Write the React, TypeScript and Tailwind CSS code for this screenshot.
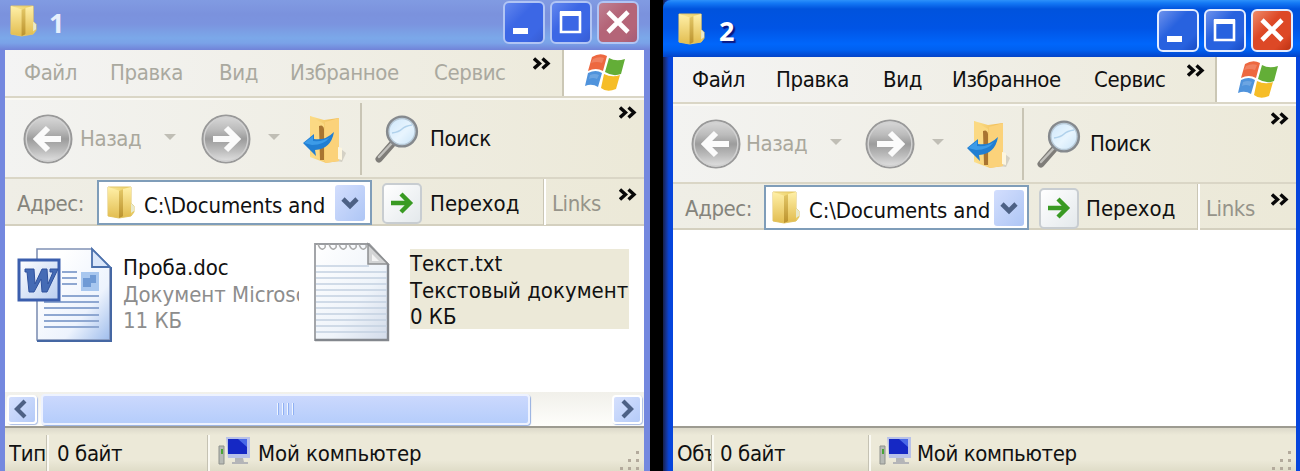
import React from 'react';
import clsx from 'clsx';

const layouts = {
  first: {
    title: 'h-[50px] pl-[5px] pb-1',
    buttons: 'gap-[5px] pr-[11px] pt-px',
    menu: 'h-12 pl-[19px] grid-cols-[86px_109px_71px_144px_99px_29px_1fr]',
    toolbar: 'h-[81px] pl-[18px] grid-cols-[57px_84px_37px_67px_30px_62px_15px_55px_189px_1fr]',
    address: 'h-[47px] pl-3 grid-cols-[80px_285px_48px_113px_9px_67px_1fr]',
    combo: 'w-[275px] pl-2 pr-[5px]',
    status: 'grid-cols-[37px_11px_150px_11px_40px_1fr]',
  },
  second: {
    title: 'h-[57px] pl-[5px] pt-1',
    buttons: 'gap-[5px] pr-[7px] pt-[5px]',
    menu: 'h-[47px] pl-[19px] grid-cols-[84px_107px_69px_142px_93px_28px_1fr]',
    toolbar: 'h-20 pl-[18px] grid-cols-[55px_84px_35px_67px_30px_60px_15px_53px_181px_1fr]',
    address: 'h-[46px] pl-3 grid-cols-[79px_275px_47px_111px_9px_65px_1fr]',
    combo: 'w-[265px] pl-1.5 pr-[3px]',
    status: 'grid-cols-[34px_9px_148px_11px_38px_1fr]',
  },
};

export default function App() {
  return (
    <div className="flex h-[471px] w-[1300px] overflow-hidden bg-black font-['DejaVu_Sans_Condensed','DejaVu_Sans',sans-serif] text-[22px] leading-[26px] tracking-[-0.4px] text-[#111] [font-stretch:condensed]">
      <div className="w-[650px] bg-[#7488df]">
        <ExplorerWindow title="1" status="Тип">
          <Files />
        </ExplorerWindow>
      </div>
      <div className="ml-[13px] w-[637px] bg-gradient-to-r from-[#16204c] via-[#0645dc] via-[6px] to-[#0645dc]">
        <ExplorerWindow title="2" status="Объ" active />
      </div>
    </div>
  );
}

type WindowProps = {
  title: string;
  status: string;
  active?: boolean;
  children?: React.ReactNode;
};

function ExplorerWindow({ title, status, active = false, children }: WindowProps) {
  const l = active ? layouts.second : layouts.first;

  return (
    <div className="flex h-full flex-col">
      {/* Заголовок окна */}
      <div
        className={clsx(
          'flex shrink-0 items-center justify-between',
          l.title,
          active
            ? 'rounded-tl-lg bg-[linear-gradient(#2d91fa_0px,#1479f5_3px,#0053dd_9px,#0054e5_28px,#0066fb_44px,#0060f0_50px,#0443c8_57px)]'
            : 'bg-[linear-gradient(#819be2_0px,#7b92dd_14px,#7b94df_24px,#7ba8e9_38px,#7aa2e8_43px,#7183d8_50px)]'
        )}
      >
        <div className={clsx('flex items-center', active ? 'ml-[10px] gap-[14px]' : 'ml-[5px] gap-3')}>
          <FolderIcon className={clsx('h-8 w-[27px]', active ? '-mt-1' : '-mt-1')} />
          <span
            className={clsx(
              "font-['Noto_Sans',sans-serif] text-[27px] font-bold",
              active ? 'text-white [text-shadow:2px_2px_1px_#0a1883]' : 'text-[#e6effc]'
            )}
          >
            {title}
          </span>
        </div>
        <div className={clsx('flex self-start', l.buttons)}>
          <TitleButton active={active}>
            <rect x="10" y="27" width="15" height="6" fill="#fff" />
          </TitleButton>
          <TitleButton active={active}>
            <path d="M11 12h19v19H11z" fill="none" stroke="#fff" strokeWidth="2.6" />
            <path d="M10 10h21v5H10z" fill="#fff" />
          </TitleButton>
          <TitleButton active={active} close>
            <path d="M11 11l20 20M31 11L11 31" stroke="#fff" strokeWidth="4.6" />
          </TitleButton>
        </div>
      </div>

      <div className={clsx('flex min-h-0 flex-1 flex-col bg-white', active ? 'ml-[10px] mr-1' : 'ml-[5px] mr-[6px]')}>
        {/* Меню */}
        <div className={clsx('grid shrink-0 items-center border-b-2 border-[#dad6c6] bg-gradient-to-r from-[#f4f4f4] to-[#ece9d8]', l.menu, active ? 'text-[#111]' : 'text-[#aaa99f]')}>
          <span>Файл</span>
          <span>Правка</span>
          <span>Вид</span>
          <span>Избранное</span>
          <span>Сервис</span>
          <Chevrons className="mt-[7px] self-start" />
          <div className="flex h-full items-center justify-center border-l-2 border-[#cbc7b5] bg-white pl-1">
            <WindowsFlag />
          </div>
        </div>

        {/* Панель инструментов */}
        <div className={clsx('grid shrink-0 items-center border-b-2 border-t-2 border-b-[#dad6c6] border-t-[#faf9f4] bg-gradient-to-r from-[#f3f3f1] to-[#ece9d8]', l.toolbar)}>
          <RoundArrow />
          <span className="text-[#aaa89d]">Назад</span>
          <Triangle />
          <RoundArrow forward />
          <Triangle />
          <FolderUp />
          <div className="h-[72px] w-0.5 bg-[#c9c5b5]" />
          <Magnifier />
          <span>Поиск</span>
          <Chevrons className="mt-1.5 self-start" />
        </div>

        {/* Адресная строка */}
        <div className={clsx('grid shrink-0 items-center border-b-2 border-[#d4d0bf] bg-gradient-to-r from-[#efeee6] to-[#ece9d8]', l.address)}>
          <span className="pt-1 text-[#85847c]">Адрес:</span>
          <div className={clsx('mt-px flex h-[45px] items-center border-2 border-[#7f9db9] bg-white', l.combo)}>
            <FolderIcon className="h-[33px] w-7 shrink-0" />
            <span className="ml-[9px] w-[190px] whitespace-nowrap pt-1.5 tracking-[-0.15px]">C:\Documents and</span>
            <div className="ml-auto flex h-9 w-[30px] shrink-0 items-center justify-center rounded-[3px] bg-gradient-to-br from-[#d3defd] to-[#aec6f5]">
              <svg width="18" height="14" viewBox="0 0 18 14">
                <path d="M2 3l7 7 7-7" fill="none" stroke="#4d6185" strokeWidth="4.6" />
              </svg>
            </div>
          </div>
          <div className="mt-0.5 flex h-[41px] w-10 items-center justify-center rounded-[5px] border-2 border-[#c8cdd1] bg-gradient-to-br from-white to-[#e4e9ec]">
            <svg width="24" height="24" viewBox="0 0 24 24">
              <path d="M1 12h19M11 3l9 9-9 9" fill="none" stroke="#399a23" strokeWidth="4.4" />
            </svg>
          </div>
          <span className="pt-1 tracking-[0px]">Переход</span>
          <div className="h-full w-[3px] border-l border-[#cac6b5] bg-white" />
          <span className="pt-1 text-[#96948a]">Links</span>
          <Chevrons className="mt-[9px] self-start" />
        </div>

        <div className="min-h-0 flex-1 overflow-hidden">{children}</div>

        {/* Строка состояния */}
        <div className={clsx('grid h-[45px] shrink-0 items-center border-t-2 border-[#9d9b91] bg-[linear-gradient(#dcd9ca,#ece9d8_7px,#ece9d8_32px,#dfdcc8)] pl-1 pt-[7px]', l.status)}>
          <span className="overflow-hidden whitespace-nowrap pt-0.5">{status}</span>
          <Divider />
          <span className="pt-0.5">0 байт</span>
          <Divider />
          <ComputerIcon />
          <div className="flex h-full justify-between">
            <span className={clsx('pt-1.5', active ? 'tracking-[-0.4px]' : 'tracking-[-0.1px]')}>Мой компьютер</span>
            <Grip />
          </div>
        </div>
      </div>
    </div>
  );
}

function Files() {
  return (
    <div className="flex h-full flex-col justify-between">
      <div className="flex pl-3 pt-4 leading-[26.5px] tracking-[0px]">
        <WordIcon />
        <div className="ml-1.5 mt-[13px] w-[176px] overflow-hidden whitespace-nowrap text-[#8d8d8d]">
          <div className="text-[#111]">Проба.doc</div>
          <div>Документ Microsoft</div>
          <div>11 КБ</div>
        </div>
        <TextIcon />
        <div className="ml-[19px] mt-[7px] h-[80px] w-[219px] whitespace-nowrap bg-[#ece9d8] pt-0.5">
          <div>Текст.txt</div>
          <div>Текстовый документ</div>
          <div>0 КБ</div>
        </div>
      </div>

      {/* Горизонтальная прокрутка */}
      <div className="flex h-[34px] items-center bg-gradient-to-b from-[#f1f0ea] to-[#fefefb] px-0.5">
        <ScrollButton d="M14 5L6 13l8 8" />
        <div className="ml-1 flex h-[31px] w-[489px] items-center justify-center gap-[3px] rounded-[4px] border-2 border-[#edf2ff] bg-gradient-to-b from-[#cbd8fd] to-[#b5cdfb] shadow-[1px_1px_1px_#94aee0]">
          {[0, 1, 2, 3].map((i) => (
            <div key={i} className="h-3 w-0.5 border-l border-[#eef4fe] bg-[#8fb0f3]" />
          ))}
        </div>
        <div className="ml-auto">
          <ScrollButton d="M7 5l8 8-8 8" />
        </div>
      </div>
    </div>
  );
}

function ScrollButton({ d }: { d: string }) {
  return (
    <div className="flex h-[29px] w-[30px] items-center justify-center rounded-[4px] border-2 border-white bg-gradient-to-br from-[#d5e0fd] to-[#b5cbf8] shadow-[1px_1px_1px_#a9bce5]">
      <svg width="22" height="26" viewBox="0 0 22 26">
        <path d={d} fill="none" stroke="#4d6185" strokeWidth="4.2" />
      </svg>
    </div>
  );
}

function TitleButton({ active, close, children }: { active: boolean; close?: boolean; children: React.ReactNode }) {
  const id = `button-${active ? 'on' : 'off'}-${close ? 'close' : 'blue'}`;
  const light = close ? (active ? '#f09070' : '#c08294') : active ? '#7295ed' : '#6589ef';
  const main = close ? (active ? '#dd4826' : '#b46578') : active ? '#2862df' : '#3c67e5';
  const dark = close ? (active ? '#b93011' : '#a25b77') : active ? '#1648c2' : '#375bd0';

  return (
    <svg width="42" height="43" viewBox="0 0 42 43">
      <defs>
        <linearGradient id={id} x1="0" y1="0" x2="1" y2="1">
          <stop offset="0" stopColor={light} />
          <stop offset=".4" stopColor={main} />
          <stop offset=".75" stopColor={main} />
          <stop offset="1" stopColor={dark} />
        </linearGradient>
      </defs>
      <rect x="1" y="1" width="40" height="41" rx="5" fill={`url(#${id})`} stroke={active ? '#e4edff' : '#b1c5f4'} strokeWidth="2" />
      {children}
    </svg>
  );
}

function Chevrons({ className }: { className?: string }) {
  return (
    <svg className={className} width="18" height="13" viewBox="0 0 18 13">
      <path d="M1 1.5l5.5 5L1 11.5M9.500 1.5l5.5 5-5.5 5" fill="none" stroke="#080808" strokeWidth="3.4" />
    </svg>
  );
}

function Divider() {
  return <div className="h-9 w-[3px] border-l border-[#c5c2b3] bg-[#faf9f2]" />;
}

function Triangle() {
  return (
    <svg width="12" height="8" viewBox="0 0 12 8" className="-mt-1">
      <path d="M0 1h12L6 7z" fill="#c0beb5" />
    </svg>
  );
}

function Grip() {
  return (
    <svg className="mr-0.5 mt-2.5 shrink-0" width="24" height="26" viewBox="0 0 24 26">
      <path d="M18 6h3v3h-3zM10 14h3v3h-3zM18 14h3v3h-3zM2 22h3v3H2zM10 22h3v3h-3zM18 22h3v3h-3z" fill="#b3aa9c" />
    </svg>
  );
}

function FolderIcon({ className }: { className?: string }) {
  return (
    <svg className={className} viewBox="0 0 28 33" preserveAspectRatio="none">
      <defs>
        <linearGradient id="folder-back">
          <stop stopColor="#f9e99e" />
          <stop offset="1" stopColor="#e9c953" />
        </linearGradient>
        <linearGradient id="folder-front" x1="0" y1="0" x2="0" y2="1">
          <stop stopColor="#fff0a8" />
          <stop offset="1" stopColor="#e2bd50" />
        </linearGradient>
        <linearGradient id="folder-fold" x1="0" y1="0" x2="0" y2="1">
          <stop stopColor="#e3c766" />
          <stop offset="1" stopColor="#bb922e" />
        </linearGradient>
      </defs>
      <path d="M1 1h23v16l3 3v6l-3 4-12 2-11-2z" fill="url(#folder-back)" stroke="#e1c568" />
      <path d="M1 1l12 4v27L1 30z" fill="url(#folder-front)" />
      <path d="M12 5l5-2v27l-5 2z" fill="url(#folder-fold)" />
      <path d="M16 3l8-2v29l-8 1z" fill="url(#folder-front)" />
      <path d="M24 17l3 3v5l-3 2z" fill="#e8e9cb" />
    </svg>
  );
}

function WindowsFlag() {
  return (
    <svg width="42" height="38" viewBox="0 0 42 38">
      <path d="M7 3q8-5 15-1l-4 15q-7-4-15 0z" fill="#ed6840" />
      <path d="M24 4q7 4 16 1l-4 15q-8 3-16-2z" fill="#63ae37" />
      <path d="M3 19q8-4 14 0l-4 14q-6-4-13-1z" fill="#4f93dc" />
      <path d="M19 20q8 4 16 1l-4 14q-9 4-15-1z" fill="#f6bd27" />
      <path d="M8 5q6-3 11-1l-2 5q-5-2-11 0zM5 21q5-2 9 0l-2 4q-4-2-8 0z" fill="#fff" opacity=".17" />
    </svg>
  );
}

function RoundArrow({ forward }: { forward?: boolean }) {
  const id = forward ? 'round-forward' : 'round-back';

  return (
    <svg width="50" height="50" viewBox="0 0 50 50">
      <defs>
        <linearGradient id={id} x1="0" y1="0" x2="0" y2="1">
          <stop stopColor="#dadada" />
          <stop offset=".3" stopColor="#bcbcbc" />
          <stop offset=".5" stopColor="#9c9c9c" />
          <stop offset=".75" stopColor="#bdbdbd" />
          <stop offset="1" stopColor="#e4e4e4" />
        </linearGradient>
      </defs>
      <circle cx="25" cy="25" r="23.6" fill={`url(#${id})`} stroke="#999" strokeWidth="1.8" />
      <circle cx="25" cy="25" r="21.8" fill="none" stroke="#d1d1d1" strokeWidth="1.4" />
      <path
        d={forward ? 'M12 25h24M25 14l11 11-11 11' : 'M38 25H14M25 14L14 25l11 11'}
        fill="none"
        stroke="#fbfbfb"
        strokeWidth="6"
      />
    </svg>
  );
}

function FolderUp() {
  return (
    <svg width="48" height="52" viewBox="0 0 48 52">
      <defs>
        <linearGradient id="up-folder">
          <stop stopColor="#fce18d" />
          <stop offset="1" stopColor="#efb74f" />
        </linearGradient>
      </defs>
      <path d="M38 48l5-12 5 4-4 9z" fill="#c9c5b8" opacity=".7" />
      <path d="M12 3l14 4 15-2v43l-13 2-16-6z" fill="url(#up-folder)" />
      <path d="M12 3l14 8v37l-14-6z" fill="#fbd983" />
      <path d="M27 9l14-4v43l-14 2z" fill="#fbd27a" />
      <path d="M40 34l4 1v12l-4-1z" fill="#fdf6df" />
      <path d="M21 13q4-2 5 3v31h-4z" fill="#a97430" />
      <path d="M5 30l11-9v5q11 2 20-7-3 17-19 18l1 6z" fill="#217ed2" />
      <path d="M6 30l9-7v5q10 1 17-4-6 8-18 8z" fill="#3c9be8" />
    </svg>
  );
}

function Magnifier() {
  return (
    <svg width="44" height="50" viewBox="0 0 44 50">
      <defs>
        <linearGradient id="lens" x1="0" y1="0" x2="1" y2="1">
          <stop stopColor="#cce6fb" />
          <stop offset=".55" stopColor="#e8f5fe" />
          <stop offset="1" stopColor="#c6e2f7" />
        </linearGradient>
      </defs>
      <path d="M18 29L4 45" stroke="#7f7d79" strokeWidth="7" strokeLinecap="round" />
      <path d="M17 29L4 43" stroke="#c1c0bc" strokeWidth="2.4" strokeLinecap="round" />
      <circle cx="27" cy="17.5" r="14.6" fill="url(#lens)" stroke="#85898d" strokeWidth="3" />
      <circle cx="27" cy="17.5" r="13" fill="none" stroke="#b7c9d7" strokeWidth="1.3" />
      <path d="M17 19q7-1 10-4t10-4" fill="none" stroke="#b1d2ec" strokeWidth="1.5" />
    </svg>
  );
}

function ComputerIcon() {
  return (
    <svg width="34" height="30" viewBox="0 0 34 30" className="-mt-1">
      <path d="M1 10h5v18H1z" fill="#b7bab5" stroke="#8e918d" />
      <path d="M3 13h2v5H3z" fill="#4ba536" />
      <path d="M8 1h24v21H10z" fill="#b8c1e8" />
      <path d="M10 3h19v15H10z" fill="#1528c4" />
      <path d="M20 3h9v8z" fill="#4969e7" />
      <path d="M17 22h8l1 4h4v2H14v-2h3z" fill="#b4b5b8" />
    </svg>
  );
}

function WordIcon() {
  return (
    <svg width="100" height="101" viewBox="0 0 100 101" className="shrink-0">
      <defs>
        <linearGradient id="word-page" x1=".2" y1=".2" x2="1" y2="1">
          <stop stopColor="#fff" />
          <stop offset=".6" stopColor="#edf3fd" />
          <stop offset="1" stopColor="#9fbdec" />
        </linearGradient>
        <linearGradient id="word-badge" x1="0" y1="0" x2="1" y2="1">
          <stop stopColor="#fff" />
          <stop offset="1" stopColor="#b9cdf0" />
        </linearGradient>
      </defs>
      <path d="M20 7h55l18 18v73H20z" fill="url(#word-page)" stroke="#8091b5" strokeWidth="1.6" />
      <path d="M94 25v74H20" fill="none" stroke="#4567a3" strokeWidth="2" />
      <path d="M75 7v18h18z" fill="#dbe7fa" stroke="#4c71ad" strokeWidth="1.8" />
      <path d="M45 30h15M45 36h15M45 42h15M45 54h37M27 60h55M27 66h55M27 73h55M27 79h55M27 85h55" stroke="#8ea7d1" strokeWidth="1.8" />
      <path d="M64 30h18v19H64z" fill="#a8c7ef" />
      <path d="M66 36h7v-3h6v8h-5v4h-8z" fill="#6f9ad5" />
      <rect x="2" y="18" width="40" height="40" fill="url(#word-badge)" stroke="#3b5ead" strokeWidth="3" />
      <path d="M8 27h9l1 15 7-15h5l1 15 5-12h-3v-3h8L30 50h-5l-1-13-7 13h-5l-2-20H8z" fill="#456bb5" stroke="#2f519d" />
    </svg>
  );
}

function TextIcon() {
  return (
    <svg width="78" height="103" viewBox="0 0 78 103" className="ml-[13px] mr-px shrink-0">
      <defs>
        <linearGradient id="text-page" x1="0" y1="0" x2="1" y2="1">
          <stop stopColor="#fff" />
          <stop offset=".6" stopColor="#eff4fa" />
          <stop offset="1" stopColor="#d2dbe9" />
        </linearGradient>
      </defs>
      <path d="M3 2h54l19 20v76H3z" fill="url(#text-page)" stroke="#9a9ca0" strokeWidth="1.8" />
      <path d="M3 98h73V22" fill="none" stroke="#83878d" strokeWidth="2.4" />
      <path d="M4 24h53M4 30h71M4 36h71M4 42h71M4 48h71M4 54h71M4 60h71M4 66h71M4 72h71M4 78h71M4 84h71M4 90h71" stroke="#c4d1e1" strokeWidth="1.6" />
      <path d="M6 2q2 6 5 5t2-4M17 2q2 6 5 5t2-4M27 2q2 6 5 5t2-4M37 2q2 6 5 5t2-4M47 2q2 6 5 5t2-4" fill="none" stroke="#aaa" strokeWidth="1.5" />
      <path d="M56 2l20 20H56z" fill="#d3d4d5" stroke="#8d8f91" strokeWidth="1.5" />
      <path d="M60 12l7 7h-7z" fill="#f3f3f3" />
    </svg>
  );
}
